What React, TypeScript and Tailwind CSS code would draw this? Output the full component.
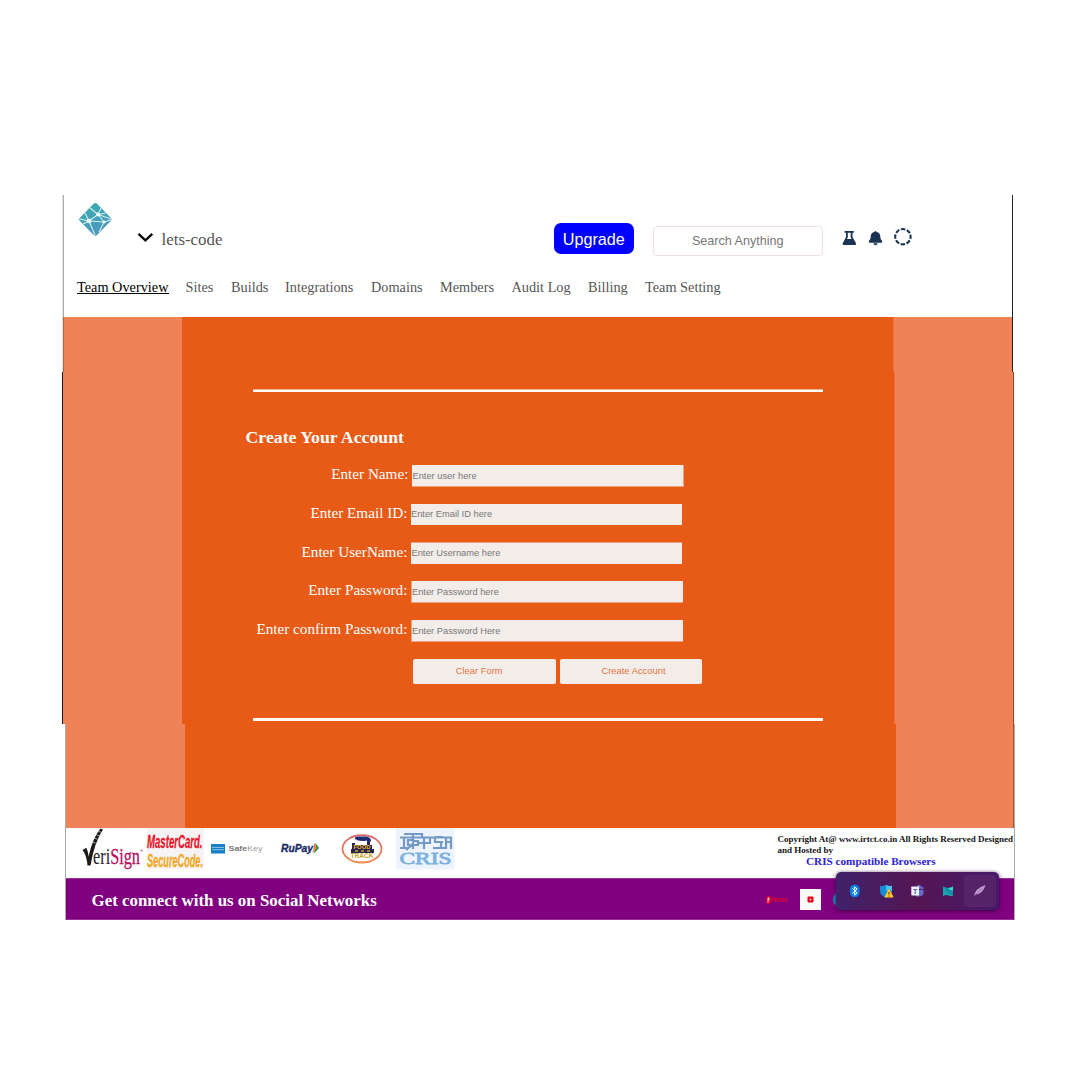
import React from "react";

const tabs = [
  { label: "Team Overview", cls: "w-[108.5px]", active: true },
  { label: "Sites", cls: "w-[45.5px]" },
  { label: "Builds", cls: "w-[54px]" },
  { label: "Integrations", cls: "w-[86px]" },
  { label: "Domains", cls: "w-[69px]" },
  { label: "Members", cls: "w-[71.5px]" },
  { label: "Audit Log", cls: "w-[76.5px]" },
  { label: "Billing", cls: "w-[57px]" },
  { label: "Team Setting", cls: "w-[90px]" },
];

const fields = [
  { label: "Enter Name:", hint: "Enter user here", cls: "pl-[1px]", box: "w-[272px] h-[22px] border-r border-b pl-[0.5px]" },
  { label: "Enter Email ID:", hint: "Enter Email ID here", cls: "", box: "w-[271px] h-[21px]" },
  { label: "Enter UserName:", hint: "Enter Username here", cls: "", box: "w-[271px] h-[22px] border-t -mt-[0.5px] pb-[1px] pl-[0.5px]" },
  { label: "Enter Password:", hint: "Enter Password here", cls: "", box: "w-[272px] h-[22px] border-l border-b" },
  { label: "Enter confirm Password:", hint: "Enter Password Here", cls: "", box: "w-[272px] h-[22px] border-l border-b" },
];

function NetworkLogo() {
  return (
    <svg className="ml-[14px] mt-[7px] h-[35px] w-[35px] shrink-0" viewBox="0 0 35 35">
      <defs>
        <linearGradient id="logo" x1="0" y1="0" x2="0.4" y2="1">
          <stop offset="0" stopColor="#39aeb0" />
          <stop offset="1" stopColor="#4c97bd" />
        </linearGradient>
      </defs>
      <path d="M15.8 1.5Q17.3.3 18.8 1.5L33 16Q34.3 17.3 33 18.7L19 33Q17.3 34.4 15.700 33L1.700 18.700Q.5 17.300 1.700 16Z" fill="url(#logo)" />
      <g stroke="#d3eef0" strokeWidth="1.1" fill="none">
        <path d="M11 19L20 12.500L28 11M11 19L17 33M11 19L7 11M11 19L26 20L33 18M20 12.500L12 6M20 12.500L26 20L21 30M20 12.500L33 17M11 19L2 17M11 19L5 22M20 12.500L23 6" />
      </g>
      <circle cx="11" cy="19" r="2.300" fill="#e9fafa" />
      <circle cx="20" cy="12.500" r="2" fill="#e9fafa" />
      <circle cx="26" cy="20" r="1.600" fill="#e9fafa" />
    </svg>
  );
}

function HeaderIcons() {
  return (
    <svg className="ml-[17px] mt-[30px] h-[24px] w-[76px]" viewBox="0 0 76 24">
      <g fill="#1b3353">
        <path fillRule="evenodd" d="M4.600 6h9.200v1.700h-1.300v4.300l3.500 6.300q.8 1.700-1 1.700H3.700q-1.800 0-1-1.700L6 12V7.700H4.600ZM7.800 7.700v4.700l-1 1.700h4.900l-1-1.700V7.700Z" />
        <path d="M35.500 6q.9 0 1 1 3.800.8 3.800 4.800 0 3 1.800 4.300.6 1-.6 1.600H29.500q-1.200-.6-.6-1.600 1.800-1.300 1.800-4.300 0-4 3.800-4.800.1-1 1-1ZM33.300 18.200h4.400q-.5 2-2.200 2t-2.200-2Z" />
      </g>
      <circle cx="62.900" cy="11.700" r="7.700" fill="none" stroke="#1b3353" strokeWidth="2.100" strokeDasharray="4.448 1.600" strokeDashoffset="2.224" />
    </svg>
  );
}

function VeriSign() {
  return (
    <svg className="h-[46px] w-[62px] overflow-visible" viewBox="0 0 62 46">
      <text x="11" y="36" fontFamily="Liberation Serif, serif" fontSize="24" textLength="47" lengthAdjust="spacingAndGlyphs" fill="#252525">
        eri<tspan fill="#b80d5d" stroke="#b80d5d" strokeWidth=".3">Sign</tspan>
      </text>
      <path d="M.5 22l3.800-2.200q1.800 3.500 2.300 8.700Q10.500 10 18.500 .500l2.500 1Q12.500 14 8.500 37.500H5.500Q4.600 27 .5 22Z" fill="#1b1b1b" />
      <path d="M16 3l3.500 1.500M14 6.500l3.500 1.500M12 10l3.500 1.300M10.500 14l3 1" stroke="#d3bdc7" strokeWidth=".8" />
      <circle cx="59.500" cy="22.500" r=".8" fill="none" stroke="#b80d5d" strokeWidth=".5" />
    </svg>
  );
}

function MasterCard() {
  return (
    <svg className="ml-[2px] h-[46px] w-[59px] overflow-visible" viewBox="0 0 59 46">
      <rect x="1" width="57" height="41" fill="#f5f3f4" />
      <g fontFamily="Liberation Sans, sans-serif" fontWeight="bold" fontStyle="italic" fontSize="17.500" strokeWidth=".3">
        <text x="1" y="19.500" textLength="55.500" lengthAdjust="spacingAndGlyphs" fill="#e9152a" stroke="#e9152a">MasterCard.</text>
        <text x="1" y="38.500" textLength="56" lengthAdjust="spacingAndGlyphs" fill="#f1a824" stroke="#f1a824">SecureCode.</text>
      </g>
    </svg>
  );
}

function SafeKey() {
  return (
    <svg className="ml-[5px] h-[46px] w-[56px] overflow-visible" viewBox="0 0 56 46">
      <rect x="1" y="16" width="14" height="9.500" fill="#147fc5" />
      <path d="M2 19.400h12M2 21.700h12" stroke="#8fc4e6" strokeWidth="1" />
      <text x="18.500" y="23.200" fontFamily="Liberation Sans, sans-serif" fontSize="7.400" textLength="34" lengthAdjust="spacingAndGlyphs" fill="#99999d">
        <tspan fontWeight="bold" fill="#77777b">Safe</tspan>Key
      </text>
    </svg>
  );
}

function RuPay() {
  return (
    <svg className="ml-[14px] h-[46px] w-[42px]" viewBox="0 0 42 46">
      <text x="1" y="24" fontFamily="Liberation Sans, sans-serif" fontSize="11.500" fontWeight="bold" fontStyle="italic" textLength="32" lengthAdjust="spacingAndGlyphs" fill="#202c68" stroke="#202c68" strokeWidth=".4">RuPay</text>
      <path d="M35.500 15l3.500 5-5 5.500 1.500-5.500Z" fill="#168c4d" />
      <path d="M34 15l3.200 5-5 5.500 1.600-5.500Z" fill="#e67b34" />
    </svg>
  );
}

function FoodTrack() {
  return (
    <svg className="ml-[19px] h-[46px] w-[42px]" viewBox="0 0 42 46">
      <defs>
        <linearGradient id="ring" x1="0" y1="0" x2="0" y2="1">
          <stop stopColor="#dc626b" /><stop offset="1" stopColor="#ed8a4b" />
        </linearGradient>
      </defs>
      <ellipse cx="21" cy="20.800" rx="19.500" ry="13.700" fill="#fff" stroke="url(#ring)" strokeWidth="1.800" />
      <path d="M14 11q-1-3 4-2.500h7q5 .5 5 4.500l-2 2h-2v-2.500q-8 1.500-12-1.500Z" fill="#202c72" />
      <path d="M11 18v-3h3v2h12v-3h3v3h2v4h2v4H10v-4h1Z" fill="#28264f" />
      <text x="12.500" y="20.500" fontFamily="Liberation Sans, sans-serif" fontWeight="bold" fontSize="5" textLength="17" lengthAdjust="spacingAndGlyphs" fill="#edb52b">FOOD</text>
      <path d="M14 23h3m3 0h3m3 0h3" stroke="#c49e2c" strokeWidth="1.300" />
      <text x="9.500" y="30.300" fontFamily="Liberation Sans, sans-serif" fontWeight="bold" fontSize="6.500" textLength="23" lengthAdjust="spacingAndGlyphs" fill="#c1a22a">TRACK</text>
    </svg>
  );
}

function Cris() {
  return (
    <svg className="ml-[12.500px] h-[46px] w-[59px] shrink-0" viewBox="0 0 59 46">
      <rect y="0" width="58.500" height="41.500" fill="#edf4ff" />
      <g stroke="#7399c4" strokeWidth="2.200" fill="none">
        <path d="M4 9.500h18M22 9.500h34M8 9v11M4 20h8M17 7v14M17 12h-5v5h10v-4h-5M8 6h18v3M10 22l6-5M28 9v12M22 15h6M34 9v6h-5M39 9v5h6v6h-8M39 9h8M47 14h-3M55 9v12M55 14h-5v-4M50 14v6h-4" />
      </g>
      <text x="3.500" y="36" fontFamily="Liberation Serif, serif" fontSize="16.500" textLength="52" lengthAdjust="spacingAndGlyphs" fill="#7db2de" stroke="#7db2de" strokeWidth=".8">CRIS</text>
    </svg>
  );
}

function SystemTray() {
  return (
    <div className="absolute left-[770px] top-[148px] flex h-[38px] w-[163px] items-center rounded-[5px] bg-gradient-to-r from-[#40216b] via-[#541553] to-[#46196c] shadow-[0_1px_4px_#38003b]">
      <svg className="h-[38px] w-[163px] shrink-0" viewBox="0 0 163 38">
        <rect x="128.500" y="3.500" width="31" height="31" rx="3" fill="#562369" stroke="#5d2b70" strokeWidth=".6" />
        <rect x="14" y="12.700" width="9.500" height="12.600" rx="4.700" fill="#0783ec" />
        <path d="M16.300 16.300l4.800 4.500-2.400 2.300v-8.200l2.400 2.200-4.800 4.500" fill="none" stroke="#fff" strokeWidth="1" />
        <path d="M50 12.700q3 2 6 1v5q0 4.500-6 7-6-2.500-6-7v-5q3 1 6-1Z" fill="#168bd5" />
        <path d="M50 12.700q3 2 6 1v5h-6Z" fill="#4cc1ef" />
        <path d="M53 17.500l4 7.500h-8Z" fill="#ffc727" stroke="#ffc727" strokeLinejoin="round" />
        <path d="M53 20v2.600m0 .9v1" stroke="#4b3514" strokeWidth=".9" />
        <circle cx="83" cy="15" r="2" fill="#797de0" /><circle cx="86" cy="16" r="1.500" fill="#6268cb" />
        <path d="M79 18h8.500v4q-1 2.500-3.500 2-3 2-5-1Z" fill="#666bcc" />
        <rect x="75.300" y="14.500" width="7.700" height="9" rx=".7" fill="#eef0ff" />
        <text x="76.900" y="21.500" fontFamily="Liberation Sans, sans-serif" fontSize="7" fontWeight="bold" fill="#4b52a9">T</text>
        <path d="M107 14.500l4 1.500q3 0 6-1.500v9q-2 1-4 0-3-1-6 .5Z" fill="#14a8b2" /><path d="M107 14.500q2 6 10 9v-9q-3 1.500-6 1.500Z" fill="#178fa9" /><path d="M112 16q3 0 5-1.500v4q-3 0-5-2.500Z" fill="#35e0c3" />
        <path d="M138 24.500q1-8 11.500-11.500-1 4-4 7-3 2.500-6 2.500" fill="#c6a0d5" />
        <path d="M138 24.500q4-4 9-9" stroke="#754588" strokeWidth=".7" />
      </svg>
    </div>
  );
}

export default function App() {
  return (
    <main className="flex h-[1080px] w-[1080px] flex-col bg-white pt-[195px] font-['Liberation_Serif',serif]">
      <section className="ml-[62px] h-[177px] w-[951px] border-r border-[#242424]">
        <header className="h-[122px] border-l border-[#dde3e3]">
          <div className="flex h-[84px] items-start border-l border-[#adadad]">
            <NetworkLogo />
            <svg className="ml-[23.500px] mt-[36px] h-[13px] w-[17px]" viewBox="0 0 17 13">
              <path d="M1.500 2.800l6.900 6.500 6.900-6.500" fill="none" stroke="#111" strokeWidth="2.500" />
            </svg>
            <span className="ml-[8px] mt-[34px] w-[392px] whitespace-nowrap text-[16.900px] leading-[22px] text-[#555]">lets-code</span>
            <button className="mt-[28px] h-[31px] w-[80px] shrink-0 rounded-[7px] bg-[#0000ff] pl-[0.500px] font-['Liberation_Sans',sans-serif] text-[16.200px] leading-[33px] text-white">Upgrade</button>
            <input aria-label="Search" placeholder="Search Anything" className="ml-[19px] mt-[31px] h-[30px] w-[170.500px] shrink-0 rounded-[4px] border border-[#eedfe1] text-center font-['Liberation_Sans',sans-serif] text-[12.600px] placeholder:text-[#777]" />
            <HeaderIcons />
          </div>
          <nav className="flex h-[38px] border-l border-[#adadad] pl-[13px] text-[14.300px] leading-[16px] text-[#555]">
            {tabs.map((t) => (
              <a key={t.label} className={t.cls + " shrink-0 whitespace-nowrap"}>
                <span className={t.active ? "inline-block h-[15px] border-b border-black text-black" : ""}>{t.label}</span>
              </a>
            ))}
          </nav>
        </header>
        <div className="flex h-[55px] border-l border-[#dde3e3]">
          <div className="w-[119px] border-l border-[#b46547] bg-[#ef8256]" />
          <div className="h-[55px] w-[712px] border-r border-[#ec6e38] bg-[#e85b17]" />
          <div className="flex-1 bg-[#ef8256]" />
        </div>
      </section>

      <section className="ml-[62px] flex h-[352px] w-[952px] border-l border-r border-l-[#201815] border-r-[#984329] bg-[#ef8256]">
        <div className="w-[119px] shrink-0" />
        <form className="h-[352px] w-[713px] shrink-0 border-r border-[#ec6e38] bg-[#e85b17] pt-[17px] text-white" onSubmit={(e) => e.preventDefault()}>
          <div className="ml-[71px] h-[3px] w-[570px] border-t border-[#f0b294] bg-white" />
          <h1 className="ml-[63.500px] mt-[34px] h-[39px] text-[17.750px] font-bold leading-[22px]">Create Your Account</h1>
          {fields.map((f) => (
            <div key={f.label} className={"flex h-[38.750px] items-start " + f.cls}>
              <label className="-mt-[1px] mr-[3.600px] w-[225.400px] shrink-0 whitespace-nowrap text-right text-[15.200px] leading-[19px]">{f.label}</label>
              <input aria-label={f.label} placeholder={f.hint} className={"rounded-none border-[#eda27f] bg-[#f2ede9] font-['Liberation_Sans',sans-serif] text-[9.300px] text-[#777] placeholder:text-[#777] " + f.box} />
            </div>
          ))}
          <div className="ml-[231.400px] flex gap-[4px] font-['Liberation_Sans',sans-serif] text-[9.400px] text-[#e57442]">
            <button type="reset" className="h-[25px] w-[142.600px] rounded-[2px] bg-[#f2ede9] pr-[11px]">Clear Form</button>
            <button className="h-[25px] w-[142px] rounded-[2px] bg-[#f2ede9] pl-[5px]">Create Account</button>
          </div>
          <div className="ml-[71px] mt-[34px] h-[3px] w-[570px] bg-[#fffaf6]" />
        </form>
      </section>

      <footer className="relative ml-[65px] h-[196px] w-[950px] border-l border-r border-[#aaa]">
        <div className="flex h-[104px] bg-[#ef8256]">
          <div className="w-[119px]" />
          <div className="w-[711px] bg-[#e85b17]" />
          <div className="flex-1 border-r border-[#a5532f]" />
        </div>
        <div className="flex h-[50px]">
          <div className="flex w-[711.500px] shrink-0 pl-[16px]">
            <VeriSign /><MasterCard /><SafeKey /><RuPay /><FoodTrack /><Cris />
          </div>
          <div className="mt-[6px] whitespace-nowrap text-[9.030px] font-bold leading-[10.500px] text-[#151515]">
            <p>Copyright At@ www.irtct.co.in All Rights Reserved Designed</p>
            <p>and Hosted by</p>
            <p className="ml-[28.500px] text-[11.200px] leading-[13px] text-[#2c22d4]">CRIS compatible Browsers</p>
          </div>
        </div>
        <div className="flex h-[42px] items-start border-y border-[#983298] bg-[#800080]">
          <strong className="ml-[25.500px] mt-[11px] w-[674.500px] text-[16.900px] leading-[22px] text-white">Get connect with us on Social Networks</strong>
          <svg className="mt-[10px] h-[22px] w-[22px] overflow-visible" viewBox="0 0 22 22">
            <ellipse cx="2.500" cy="11" rx="2.200" ry="4" fill="#f00025" /><path d="M2 14V9h1q1 2-1 2" fill="none" stroke="#fff" strokeWidth=".7" />
            <text x="5" y="13.400" fontFamily="Liberation Sans, sans-serif" fontSize="7" fontWeight="bold" textLength="16" lengthAdjust="spacingAndGlyphs" fill="#e60023">Pinterest</text>
          </svg>
          <svg className="ml-[12px] mt-[10px] h-[21px] w-[21px] bg-[#fafafa]" viewBox="0 0 21 21">
            <rect x="7.500" y="7.500" width="6" height="6" rx="1" fill="#f00018" /><path d="M9.800 9.200l2 1.300-2 1.300Z" fill="#fff" />
          </svg>
          <div className="ml-[12px] mt-[12px] h-[17px] w-[17px] rounded-full bg-[#159dba]" />
        </div>
        <SystemTray />
      </footer>
    </main>
  );
}
